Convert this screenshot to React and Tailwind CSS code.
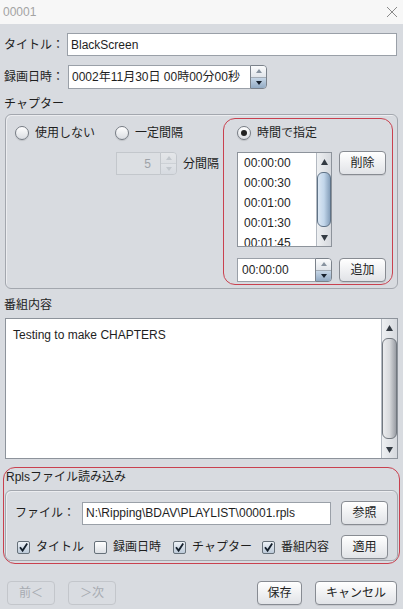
import React from 'react';

const Radio = ({ checked }) => (
    <span className="w-[14px] h-[14px] shrink-0 rounded-full border border-[#767c84] bg-gradient-to-b from-white to-[#dadde2] shadow-[0_1px_1px_rgba(0,0,0,0.12)] flex items-center justify-center">
        {checked && <span className="w-[6px] h-[6px] rounded-full bg-[#222]" />}
    </span>
);

const Check = ({ checked }) => (
    <span
        className={`w-[13px] h-[13px] shrink-0 rounded-[2px] border border-[#667079] flex items-center justify-center bg-gradient-to-b ${
            checked ? 'from-[#eef2f7] to-[#bccad9]' : 'from-white to-[#dde0e5]'
        }`}
    >
        {checked && (
            <svg width="11" height="11" viewBox="0 0 11 11">
                <path d="M2 5.2 L4.6 8.6 L9.2 1.6" stroke="#15202c" strokeWidth="1.8" fill="none" />
            </svg>
        )}
    </span>
);

const SpinBtns = ({ disabled }) => (
    <div
        className={`w-[17px] h-full shrink-0 flex flex-col border rounded-r-[4px] overflow-hidden ${
            disabled ? 'border-[#c3c7cc]' : 'border-[#7b828b]'
        }`}
    >
        <div
            className={`flex-1 flex items-center justify-center border-b bg-gradient-to-b ${
                disabled ? 'from-[#e4e6e9] to-[#dcdfe3] border-[#cdd1d6]' : 'from-[#fbfcfd] to-[#e1e5ea] border-[#a3acb6]'
            }`}
        >
            <svg width="6" height="4" viewBox="0 0 6 4">
                <path d="M0 4 L3 0 L6 4Z" fill={disabled ? '#c2c7cd' : '#8893a0'} />
            </svg>
        </div>
        <div
            className={`flex-1 flex items-center justify-center bg-gradient-to-b ${
                disabled ? 'from-[#e0e3e7] to-[#d6dae0]' : 'from-[#c6d6e6] to-[#93abc4]'
            }`}
        >
            <svg width="6" height="4" viewBox="0 0 6 4">
                <path d="M0 0 L6 0 L3 4Z" fill={disabled ? '#c2c7cd' : '#17212d'} />
            </svg>
        </div>
    </div>
);

const Button = ({ children, className = '', disabled }) => (
    <div
        className={`h-[24px] shrink-0 rounded-[4px] border flex items-center justify-center ${
            disabled
                ? 'border-[#c3c6cb] bg-[#d9dce1] text-[#a7abb1]'
                : 'border-[#878b92] bg-gradient-to-b from-white to-[#e1e3e7] text-[#222] shadow-[0_1px_0_rgba(0,0,0,0.08)]'
        } ${className}`}
    >
        {children}
    </div>
);

const Arrow = ({ up }) => (
    <svg width="7" height="7" viewBox="0 0 7 7">
        <path d={up ? 'M0 6 L3.5 0 L7 6Z' : 'M0 1 L7 1 L3.5 7Z'} fill="#333a42" />
    </svg>
);

const VScroll = ({ blue, w }) => (
    <div className={`${w} h-full shrink-0 border-l border-[#b3b9c1] bg-gradient-to-r from-[#eef0f2] to-[#d6d9de] flex flex-col`}>
        <div className="h-[18px] shrink-0 flex items-center justify-center">
            <Arrow up />
        </div>
        <div className="flex-1 py-[1px]">
            <div
                className={`h-full rounded-[6px] border bg-gradient-to-r ${
                    blue
                        ? 'border-[#5f7286] from-[#dbe7f3] via-[#c2d6ea] to-[#86a0bb]'
                        : 'border-[#72787f] from-[#ebecee] via-[#d8dadd] to-[#9a9ea5]'
                }`}
            />
        </div>
        <div className="h-[18px] shrink-0 flex items-center justify-center">
            <Arrow />
        </div>
    </div>
);

const times = ['00:00:00', '00:00:30', '00:01:00', '00:01:30', '00:01:45'];

export default function App() {
    return (
        <div className="w-[403px] h-[609px] bg-[#d8dbe0] text-[12px] text-[#1e1e1e] font-['Liberation_Sans','Noto_Sans_CJK_JP',sans-serif] overflow-hidden">
            {/* title bar */}
            <div className="h-[24px] bg-[#f7f7f7] flex items-center justify-between pl-[3px] pr-[5px]">
                <span className="text-[#a3a3a3] leading-[14px]">00001</span>
                <svg width="12" height="12" viewBox="0 0 12 12">
                    <path d="M1 1 L11 11 M11 1 L1 11" stroke="#8a8a8a" strokeWidth="1" />
                </svg>
            </div>

            {/* title */}
            <div className="mt-[9px] flex items-center pl-[4px] pr-[6px]">
                <span className="w-[63px] shrink-0">タイトル：</span>
                <div className="flex-1 h-[23px] bg-white border border-[#9aa0a8] flex items-center pl-[3px]">BlackScreen</div>
            </div>

            {/* date */}
            <div className="mt-[9px] flex items-center pl-[4px] h-[24px]">
                <span className="w-[64px] shrink-0">録画日時：</span>
                <div className="w-[182px] h-full bg-white border border-[#9aa0a8] border-r-0 flex items-center pl-[3px]">
                    0002年11月30日 00時00分00秒
                </div>
                <SpinBtns />
            </div>

            {/* chapter */}
            <div className="h-[25px] pt-[8px] pl-[4px] leading-[14px]">チャプター</div>
            <div className="mx-[5px] h-[175px] rounded-[6px] border border-[#a3a7ae] shadow-[inset_1px_1px_0_rgba(255,255,255,0.5)] flex pt-[3px] pr-[4px] pb-[3px]">
                <div className="flex-1 pl-[9px] pt-[8px]">
                    <div className="h-[14px] flex items-center">
                        <Radio />
                        <span className="ml-[6px]">使用しない</span>
                        <span className="ml-[20px]">
                            <Radio />
                        </span>
                        <span className="ml-[6px]">一定間隔</span>
                    </div>
                    <div className="mt-[12px] ml-[101px] h-[23px] flex items-center">
                        <div className="w-[44px] h-full bg-[#dcdfe3] border border-[#c3c7cc] border-r-0 flex items-center justify-end pr-[9px] text-[#9ea2a8]">
                            5
                        </div>
                        <SpinBtns disabled />
                        <span className="ml-[6px]">分間隔</span>
                    </div>
                </div>

                <div className="w-[170px] rounded-[12px] border border-[#c9414f] pl-[13px] pt-[7px]">
                    <div className="h-[14px] flex items-center">
                        <Radio checked />
                        <span className="ml-[6px]">時間で指定</span>
                    </div>
                    <div className="mt-[12px] flex items-start">
                        <div className="w-[95px] h-[95px] bg-white border border-[#8d939b] flex overflow-hidden">
                            <div className="flex-1 pl-[6px] overflow-hidden">
                                {times.map((t) => (
                                    <div key={t} className="h-[20px] leading-[20px] shrink-0">
                                        {t}
                                    </div>
                                ))}
                            </div>
                            <VScroll blue w="w-[15px]" />
                        </div>
                        <Button className="ml-[7px] w-[47px] -mt-[1px]">削除</Button>
                    </div>
                    <div className="mt-[11px] flex items-center h-[24px]">
                        <div className="w-[78px] h-full bg-white border border-[#9aa0a8] border-r-0 flex items-center pl-[4px]">
                            00:00:00
                        </div>
                        <SpinBtns />
                        <Button className="ml-[7px] w-[47px] h-[23px]">追加</Button>
                    </div>
                </div>
            </div>

            {/* program content */}
            <div className="h-[29px] pt-[9px] pl-[4px] leading-[14px]">番組内容</div>
            <div className="mx-[5px] h-[141px] bg-white border border-[#8d939b] flex">
                <div className="flex-1 pl-[7px] pt-[8px] leading-[16px]">Testing to make CHAPTERS</div>
                <VScroll w="w-[16px]" />
            </div>

            {/* rpls import */}
            <div className="mt-[8px] mx-[3px] h-[97px] rounded-[12px] border border-[#c9414f] px-[1px]">
                <div className="pt-[2px] pl-[1px] leading-[14px]">Rplsファイル読み込み</div>
                <div className="mt-[6px] h-[71px] rounded-[6px] border border-[#a3a7ae] shadow-[inset_1px_1px_0_rgba(255,255,255,0.5)] pt-[10px] pl-[9px] pr-[9px]">
                    <div className="h-[24px] flex items-center">
                        <span className="w-[67px] shrink-0">ファイル：</span>
                        <div className="flex-1 h-[23px] bg-white border border-[#9aa0a8] flex items-center pl-[3px]">
                            N:\Ripping\BDAV\PLAYLIST\00001.rpls
                        </div>
                        <Button className="ml-[10px] w-[47px]">参照</Button>
                    </div>
                    <div className="mt-[10px] h-[24px] flex items-center pl-[2px]">
                        <Check checked />
                        <span className="ml-[6px]">タイトル</span>
                        <span className="ml-[10px]">
                            <Check />
                        </span>
                        <span className="ml-[6px]">録画日時</span>
                        <span className="ml-[12px]">
                            <Check checked />
                        </span>
                        <span className="ml-[6px]">チャプター</span>
                        <span className="ml-[10px]">
                            <Check checked />
                        </span>
                        <span className="ml-[6px]">番組内容</span>
                        <Button className="ml-auto w-[47px] h-[23px]">適用</Button>
                    </div>
                </div>
            </div>

            {/* bottom buttons */}
            <div className="mt-[17px] flex items-center pl-[7px] pr-[6px]">
                <Button disabled className="w-[48px]">前＜</Button>
                <Button disabled className="ml-[13px] w-[48px]">＞次</Button>
                <Button className="ml-auto w-[45px]">保存</Button>
                <Button className="ml-[13px] w-[82px]">キャンセル</Button>
            </div>
        </div>
    );
}
